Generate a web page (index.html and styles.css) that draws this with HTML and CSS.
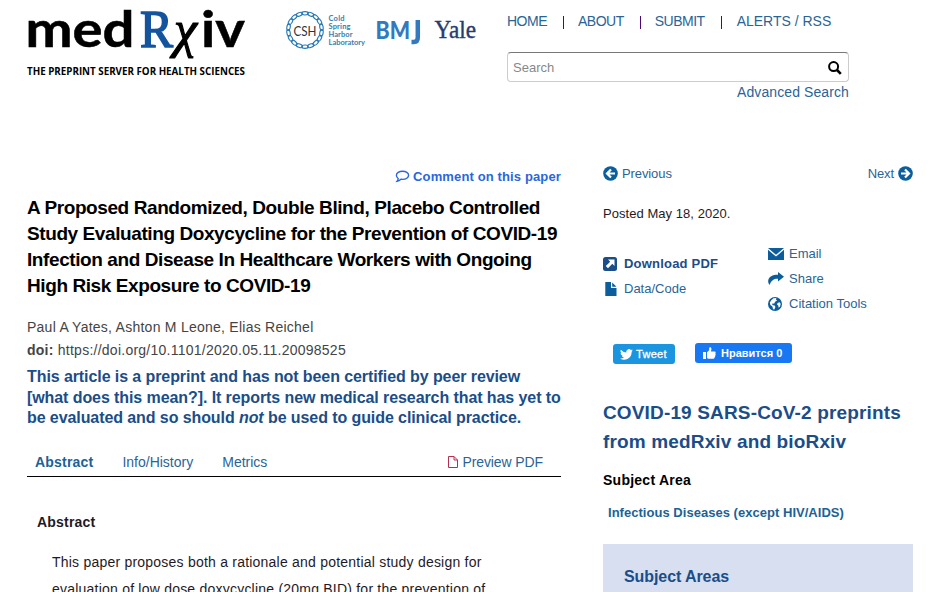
FILE: index.html
```html
<!DOCTYPE html>
<html lang="en">
<head>
    <meta charset="UTF-8">
    <meta name="viewport" content="width=device-width, initial-scale=1.0">
    <title>A Proposed Randomized, Double Blind, Placebo Controlled Study | medRxiv</title>
    <link rel="stylesheet" href="styles.css">
</head>
<body>
    <header class="header">
        <a class="logo" href="#">
            <svg width="222" height="80" viewBox="25 0 222 80">
                <g class="logo-word">
                    <text x="25.500" y="47" textLength="109" lengthAdjust="spacingAndGlyphs">med</text>
                    <text class="logo-r" x="140" y="47" textLength="33" lengthAdjust="spacingAndGlyphs">R</text>
                    <text class="logo-chi" x="174" y="47" textLength="23" lengthAdjust="spacingAndGlyphs">χ</text>
                    <text x="201" y="47" textLength="44" lengthAdjust="spacingAndGlyphs">iv</text>
                </g>
                <text class="logo-tag" x="27" y="75" textLength="218" lengthAdjust="spacingAndGlyphs">THE PREPRINT SERVER FOR HEALTH SCIENCES</text>
            </svg>
        </a>
        <div class="partners">
            <svg width="195" height="60" viewBox="283 0 195 60">
                <defs>
                    <g id="links">
                        <ellipse cx="305" cy="13.300" rx="3.300" ry="1.700"/>
                        <ellipse cx="305" cy="46.700" rx="3.300" ry="1.700"/>
                    </g>
                </defs>
                <g class="ring">
                    <use href="#links"/>
                    <use href="#links" transform="rotate(20 305 30)"/>
                    <use href="#links" transform="rotate(40 305 30)"/>
                    <use href="#links" transform="rotate(60 305 30)"/>
                    <use href="#links" transform="rotate(80 305 30)"/>
                    <use href="#links" transform="rotate(100 305 30)"/>
                    <use href="#links" transform="rotate(120 305 30)"/>
                    <use href="#links" transform="rotate(140 305 30)"/>
                    <use href="#links" transform="rotate(160 305 30)"/>
                </g>
                <text class="csh" x="293.500" y="35.500" textLength="23" lengthAdjust="spacingAndGlyphs">CSH</text>
                <g class="csh-name">
                    <text x="328.500" y="20.500" textLength="16">Cold</text>
                    <text x="328.500" y="28.500" textLength="22">Spring</text>
                    <text x="328.500" y="37" textLength="24">Harbor</text>
                    <text x="328.500" y="45" textLength="36.500">Laboratory</text>
                </g>
                <text class="bmj" x="375.500" y="38.500" textLength="34.500" lengthAdjust="spacingAndGlyphs">BM</text>
                <path class="bmj-j" d="M417.800 20v17.500q0 4.500-4 4.500h-2.300"/>
                <text class="yale" x="434.500" y="38" textLength="41.500" lengthAdjust="spacingAndGlyphs">Yale</text>
            </svg>
        </div>
        <div class="header-right">
            <nav class="nav">
                <a href="#">HOME</a>
                <a href="#">ABOUT</a>
                <a href="#">SUBMIT</a>
                <a href="#">ALERTS / RSS</a>
            </nav>
            <form class="search">
                <input type="text" placeholder="Search">
                <svg width="14" height="14" viewBox="0 0 14 14"><circle cx="5.600" cy="5.600" r="4.500" fill="none" stroke="#000" stroke-width="2"/><path d="M9 9l3.800 3.800" stroke="#000" stroke-width="2.600"/></svg>
            </form>
            <a class="advanced" href="#">Advanced Search</a>
        </div>
    </header>

    <main class="main">
        <section class="article">
            <a class="comment" href="#">
                <svg width="15" height="13" viewBox="0 0 15 13"><path d="M7.600 1.200c3.300 0 6 1.800 6 4.100s-2.700 4.100-6 4.100c-.6 0-1.200 0-1.700-.2-1 1-2.300 1.800-3.800 2 .7-.8 1-1.600 1.100-2.700C2.100 7.800 1.400 6.600 1.400 5.300c0-2.300 2.800-4.100 6.200-4.100z" fill="none" stroke="currentColor" stroke-width="1.400"/></svg>
                <span>Comment on this paper</span>
            </a>
            <h1 class="title">
                A Proposed Randomized, Double Blind, Placebo Controlled<br>
                Study Evaluating Doxycycline for the Prevention of COVID-19<br>
                Infection and Disease In Healthcare Workers with Ongoing<br>
                High Risk Exposure to COVID-19
            </h1>
            <div class="meta authors">Paul A Yates, Ashton M Leone, Elias Reichel</div>
            <div class="meta doi"><b>doi:</b> https://doi.org/10.1101/2020.05.11.20098525</div>
            <p class="notice">
                This article is a preprint and has not been certified by peer review<br>
                [what does this mean?]. It reports new medical research that has yet to<br>
                be evaluated and so should <em>not</em> be used to guide clinical practice.
            </p>
            <div class="tabs">
                <a class="active" href="#">Abstract</a>
                <a href="#">Info/History</a>
                <a href="#">Metrics</a>
                <a class="preview" href="#">
                    <svg width="10" height="12" viewBox="0 0 10 12"><path d="M.5.500h5.500l3.500 3.500v7.500h-9zM6 .5v3.500h3.500" fill="none" stroke="#b5304f"/></svg>
                    <span>Preview PDF</span>
                </a>
            </div>
            <div class="abstract">
                <h2>Abstract</h2>
                <p>This paper proposes both a rationale and potential study design for<br>evaluation of low dose doxycycline (20mg BID) for the prevention of</p>
            </div>
        </section>

        <aside class="sidebar">
            <div class="pager">
                <a href="#">
                    <svg width="15" height="15" viewBox="0 0 15 15"><circle cx="7.500" cy="7.500" r="7.300" fill="currentColor"/><path d="M12 7.500H4.500M8 3.500l-4 4 4 4" fill="none" stroke="#fff" stroke-width="2.200"/></svg>
                    <span>Previous</span>
                </a>
                <a href="#">
                    <span>Next</span>
                    <svg width="15" height="15" viewBox="0 0 15 15"><circle cx="7.500" cy="7.500" r="7.300" fill="currentColor"/><path d="M3 7.500h7.500M7 3.500l4 4-4 4" fill="none" stroke="#fff" stroke-width="2.200"/></svg>
                </a>
            </div>
            <div class="posted">Posted May 18, 2020.</div>
            <div class="tools">
                <div class="tools-left">
                    <a class="download" href="#">
                        <svg width="14" height="14" viewBox="0 0 14 14"><rect width="14" height="14" rx="2.500" fill="currentColor"/><path d="M5 2.500h6.500V9L9.300 6.800 5 11.200 2.800 9l4.400-4.300z" fill="#fff"/></svg>
                        <span>Download PDF</span>
                    </a>
                    <a href="#">
                        <svg width="14" height="14" viewBox="0 0 14 14"><path d="M2.300 0h5.700v6h5.500v8H2.300zM9.200.400l4.300 4.400H9.200z" fill="currentColor"/></svg>
                        <span>Data/Code</span>
                    </a>
                </div>
                <div class="tools-right">
                    <a href="#">
                        <svg width="16" height="12" viewBox="0 0 16 12"><path d="M0 0h16L8 6.800zM0 1.800l8 6.800 8-6.800V12H0z" fill="currentColor"/></svg>
                        <span>Email</span>
                    </a>
                    <a href="#">
                        <svg width="16" height="14" viewBox="0 0 16 14"><path d="M10 0l6 4.700-6 4.800V6.700C6 6.500 3.500 8 1.500 13 .7 12 0 10.500.2 8.600.7 4.500 4.500 2.700 10 2.700z" fill="currentColor"/></svg>
                        <span>Share</span>
                    </a>
                    <a href="#">
                        <svg width="14" height="14" viewBox="0 0 14 14"><circle cx="7" cy="7" r="7" fill="currentColor"/><path d="M5.500 1.300l3-.2-.7 1.500 1.300.8-2 1.400-.8 1.800-2.500.2 1 1.400 1.900.3.700 1.500-1.200 2.700-1.200-.8-.6-2.300-2-1.500-.6-2.600 1.700-2.600zM9.500 6l2-.7 1.200 1.500-.6 2.600-1.500 1.400-.3-2.300-1.200-.8z" fill="#fff"/></svg>
                        <span>Citation Tools</span>
                    </a>
                </div>
            </div>
            <div class="social">
                <a class="tweet" href="#">
                    <svg width="13" height="11" viewBox="0 0 24 20"><path d="M24 2.400a10 10 0 0 1-2.800.8A5 5 0 0 0 23.300.5a10 10 0 0 1-3.100 1.200 4.900 4.900 0 0 0-8.400 4.500A14 14 0 0 1 1.700 1a4.900 4.900 0 0 0 1.500 6.600A4.900 4.900 0 0 1 1 7v.1a4.900 4.900 0 0 0 4 4.800 5 5 0 0 1-2.300.1 4.900 4.900 0 0 0 4.600 3.400A9.900 9.900 0 0 1 0 17.400 14 14 0 0 0 21.500 5z" fill="#fff"/></svg>
                    <span>Tweet</span>
                </a>
                <a class="like" href="#">
                    <svg width="13" height="12" viewBox="0 0 13 12"><path d="M0 5h3v7H0zM4 5.300L6.200 3.200V.7C6.500-.2 8.600 0 8.400 2L8 4.400h3.500c1.300 0 1.400 1.500.8 2 .7.600.5 1.500-.1 1.900.4.700.1 1.400-.5 1.700.1 1-.5 1.700-1.700 1.700H6c-1 0-1.300-.5-2-.8z" fill="#fff"/></svg>
                    <span>Нравится 0</span>
                </a>
            </div>
            <h2 class="covid">COVID-19 SARS-CoV-2 preprints<br>from medRxiv and bioRxiv</h2>
            <h3 class="area-heading">Subject Area</h3>
            <a class="area" href="#">Infectious Diseases (except HIV/AIDS)</a>
            <div class="areas-box">
                <h3>Subject Areas</h3>
            </div>
        </aside>
    </main>
</body>
</html>
```
FILE: styles.css
```css
* {
    box-sizing: border-box;
    margin: 0;
    padding: 0;
}
body {
    width: 934px;
    height: 592px;
    overflow: hidden;
    background: #fff;
    color: #1f1a1f;
    font-family: "Liberation Sans", Arial, sans-serif;
    font-size: 14px;
}
a {
    color: #2a6496;
    text-decoration: none;
}
svg {
    display: block;
    flex-shrink: 0;
}
span {
    white-space: nowrap;
}

/* Header */
.header {
    display: flex;
    height: 165px;
    padding-left: 25px;
}
.logo-word {
    font-family: Lato, sans-serif;
    font-size: 49px;
    font-weight: 700;
    fill: #000;
    stroke: #000;
    stroke-width: 0.5;
}
.logo-word .logo-r {
    font-family: "Liberation Serif", serif;
    font-size: 53px;
    font-weight: 400;
    fill: #14549f;
    stroke: #14549f;
    stroke-width: 1.6;
}
.logo-word .logo-chi {
    font-family: "Liberation Serif", serif;
    font-size: 52px;
    font-style: italic;
    font-weight: 400;
    stroke-width: 1.2;
}
.logo-tag {
    font-family: "Open Sans", sans-serif;
    font-size: 10px;
    font-weight: 700;
    fill: #000;
}
.partners {
    margin-left: 36px;
}
.ring {
    fill: none;
    stroke: #2779b5;
    stroke-width: 1.1;
}
.csh {
    font-family: Lato, sans-serif;
    font-size: 14px;
    fill: #333;
}
.csh-name {
    font-family: Lato, sans-serif;
    font-size: 7.5px;
    font-weight: 700;
    fill: #3580ae;
}
.bmj {
    font-family: Lato, sans-serif;
    font-size: 25px;
    font-weight: 900;
    fill: #3479bd;
}
.bmj-j {
    fill: none;
    stroke: #3479bd;
    stroke-width: 4.5;
}
.yale {
    font-family: "Liberation Serif", serif;
    font-size: 25px;
    fill: #263d70;
    stroke: #263d70;
    stroke-width: 0.4;
}
.header-right {
    display: flex;
    flex-direction: column;
    width: 342px;
    margin-left: 29px;
    padding-top: 12px;
}
.nav {
    display: flex;
    height: 18px;
    line-height: 18px;
    letter-spacing: -0.5px;
}
.nav a + a {
    margin-left: 16px;
    padding-left: 15px;
    background: linear-gradient(#4b0878, #4b0878) no-repeat 0 4px / 1px 13px;
}
.nav a:last-child {
    padding-left: 16px;
    letter-spacing: 0;
}
.search {
    display: flex;
    align-items: center;
    height: 30px;
    margin-top: 22px;
    padding: 0 6px 0 5px;
    border: 1px solid #ccc;
    border-top-color: #777;
    border-radius: 4px;
}
.search input {
    flex: 1;
    border: none;
    outline: none;
    font-family: inherit;
    font-size: 13px;
}
.search input::placeholder {
    color: #888;
}
.search svg {
    position: relative;
    top: 1px;
}
.advanced {
    align-self: flex-end;
    margin-top: 1px;
    line-height: 18px;
    letter-spacing: 0.1px;
}

/* Article */
.main {
    display: grid;
    grid-template-columns: 534px 310px;
    column-gap: 42px;
    height: 427px;
    padding-left: 27px;
    overflow: hidden;
}
.comment {
    display: flex;
    justify-content: flex-end;
    align-items: center;
    gap: 3px;
    height: 23px;
    color: #2a66dc;
    font-size: 13px;
    font-weight: bold;
    letter-spacing: 0.13px;
}
.title {
    margin-top: 7px;
    color: #000;
    font-size: 19px;
    line-height: 26px;
    letter-spacing: -0.41px;
    white-space: nowrap;
}
.meta {
    line-height: 23px;
    color: #444;
    letter-spacing: 0.25px;
}
.authors {
    margin-top: 17px;
}
.notice {
    margin-top: 5px;
    color: #1b4d88;
    font-size: 16px;
    font-weight: bold;
    line-height: 20.5px;
    letter-spacing: -0.085px;
    white-space: nowrap;
}
.tabs {
    display: flex;
    height: 48px;
    padding: 24px 18px 0 8px;
    border-bottom: 1px solid #000;
    line-height: 18px;
}
.tabs a + a {
    margin-left: 29px;
}
.tabs .active {
    color: #1c6296;
    font-weight: bold;
    letter-spacing: 0.2px;
}
.tabs .preview {
    display: flex;
    align-items: center;
    height: 18px;
    gap: 4px;
    margin-left: auto;
    letter-spacing: -0.1px;
}
.abstract {
    padding: 36px 0 0 10px;
}
.abstract h2 {
    font-size: 14px;
    line-height: 18px;
    letter-spacing: 0.2px;
}
.abstract p {
    padding: 18px 0 0 15px;
    line-height: 27px;
    letter-spacing: 0.22px;
    white-space: nowrap;
}

/* Sidebar */
.sidebar {
    font-size: 13px;
}
.pager {
    display: flex;
    justify-content: space-between;
    height: 17px;
}
.pager a,
.tools a {
    display: flex;
    align-items: center;
}
.pager a {
    gap: 4px;
    letter-spacing: -0.1px;
}
.pager svg,
.tools svg {
    color: #0b5d9c;
}
.posted {
    margin-top: 23px;
    line-height: 18px;
    letter-spacing: 0.05px;
}
.tools {
    display: grid;
    grid-template-columns: 165px 1fr;
    margin-top: 18px;
}
.tools-left {
    padding-top: 10px;
}
.tools a {
    height: 25px;
}
.tools-left a {
    gap: 7px;
}
.tools-right a {
    display: grid;
    grid-template-columns: 21px 1fr;
}
.download {
    font-weight: bold;
    letter-spacing: 0.2px;
}
.tools .download,
.tools .download svg {
    color: #1b4d88;
}
.social {
    display: flex;
    gap: 20px;
    margin: 27px 0 0 10px;
}
.social a {
    display: flex;
    align-items: center;
    height: 20px;
    border-radius: 3px;
    color: #fff;
    font-size: 11px;
}
.tweet {
    width: 62px;
    margin-top: 1px;
    padding-left: 7px;
    gap: 3px;
    background: #1b95e0;
    letter-spacing: 0.3px;
    -webkit-text-stroke: 0.3px #fff;
}
.like {
    width: 97px;
    padding-left: 8px;
    gap: 5px;
    background: #1877f2;
    font-weight: bold;
}
.covid {
    margin-top: 34px;
    color: #1b4d88;
    font-size: 19px;
    line-height: 29px;
    letter-spacing: 0.15px;
    white-space: nowrap;
}
.area-heading {
    margin-top: 15px;
    color: #000;
    font-size: 14px;
    line-height: 18px;
    letter-spacing: 0.25px;
}
.area {
    display: block;
    margin: 15px 0 0 5px;
    color: #1c6296;
    font-weight: bold;
    line-height: 18px;
    letter-spacing: 0.03px;
    white-space: nowrap;
}
.areas-box {
    height: 80px;
    margin-top: 22px;
    padding: 23px 21px;
    background: #d7dff0;
}
.areas-box h3 {
    color: #1b4d88;
    font-size: 16px;
    line-height: 20px;
    letter-spacing: -0.08px;
}
```
